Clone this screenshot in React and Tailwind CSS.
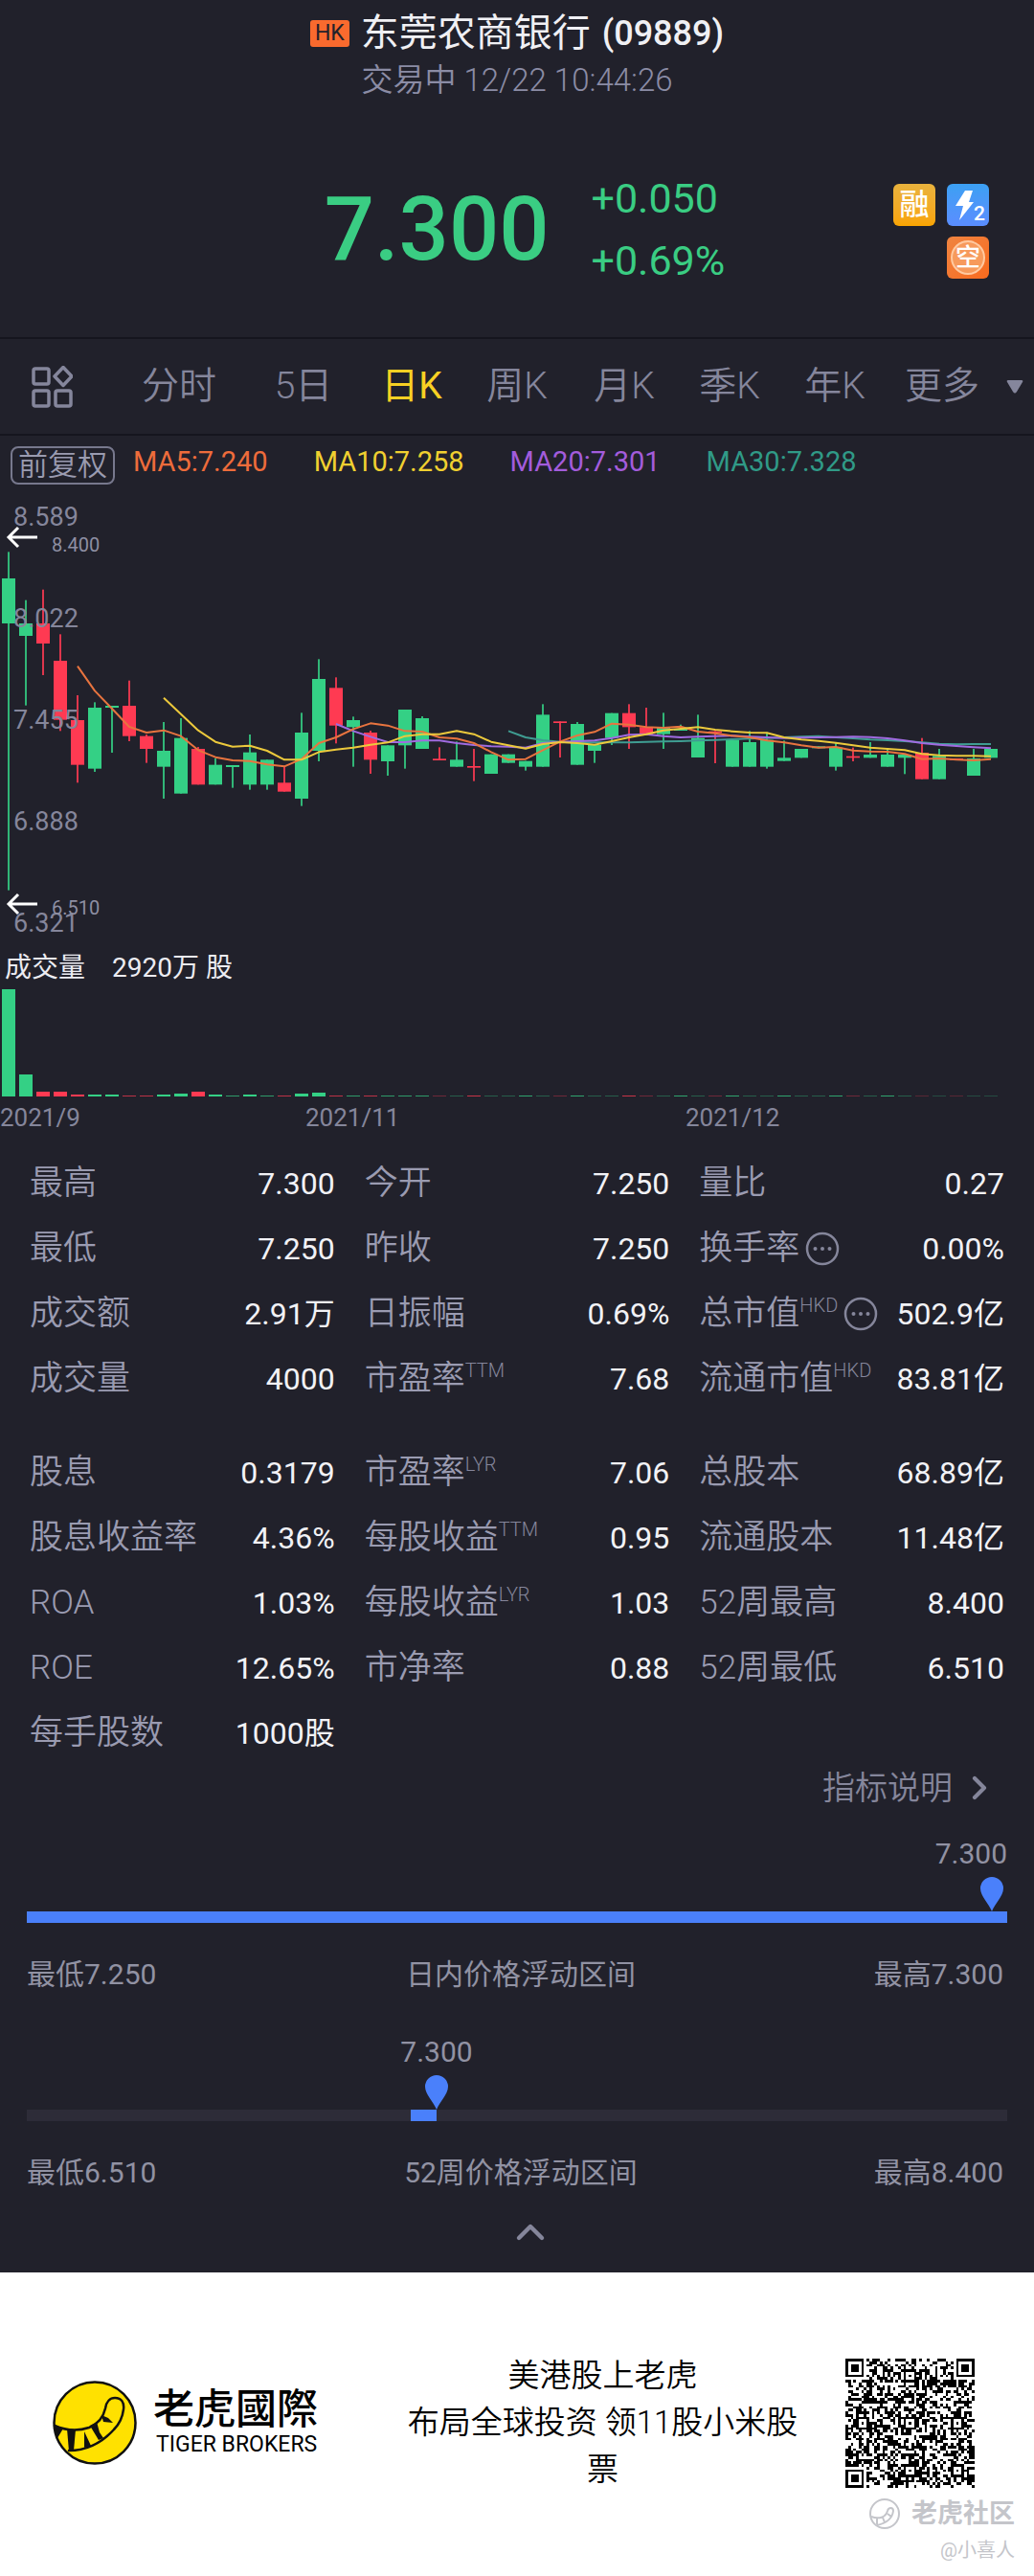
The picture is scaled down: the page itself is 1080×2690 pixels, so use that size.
import { ChevronRight, ChevronUp } from "lucide-react";

const UP = "#34d085";
const DOWN = "#ff3a52";

// [direction, high, low, body top, body bottom], in thirds of a chart unit
const CANDLES = [
  ["u", 229, 1289, 312, 453], ["u", 380, 710, 453, 492], ["d", 347, 615, 453, 516],
  ["d", 487, 790, 570, 755], ["d", 678, 952, 756, 896], ["u", 700, 918, 717, 908],
  ["u", 711, 858, 711, 717], ["d", 632, 822, 711, 806], ["d", 801, 890, 806, 846],
  ["u", 762, 1002, 852, 902], ["u", 750, 986, 812, 986], ["d", 840, 958, 846, 958],
  ["u", 876, 958, 896, 958], ["u", 897, 968, 897, 903], ["u", 801, 974, 857, 958],
  ["u", 880, 974, 880, 958], ["d", 902, 980, 952, 980], ["u", 733, 1025, 795, 1002],
  ["u", 565, 885, 627, 852], ["d", 622, 829, 655, 773], ["u", 745, 902, 756, 778],
  ["d", 789, 924, 795, 880], ["u", 835, 930, 835, 885], ["u", 723, 908, 723, 835],
  ["u", 744, 846, 750, 846], ["d", 841, 880, 877, 882], ["u", 823, 902, 880, 902],
  ["d", 846, 947, 900, 905], ["u", 863, 924, 863, 924], ["u", 863, 890, 863, 890],
  ["u", 884, 914, 884, 902], ["u", 706, 902, 739, 902], ["d", 760, 873, 760, 765],
  ["u", 762, 896, 768, 896], ["u", 834, 890, 834, 852], ["u", 734, 834, 734, 812],
  ["d", 706, 846, 734, 778], ["d", 717, 800, 778, 800], ["u", 733, 846, 780, 800],
  ["u", 770, 789, 783, 789], ["u", 739, 873, 812, 873], ["d", 790, 891, 791, 796],
  ["u", 818, 902, 818, 902], ["u", 790, 902, 825, 902], ["u", 794, 908, 818, 902],
  ["u", 820, 884, 874, 884], ["u", 846, 874, 846, 874], ["u", 838, 844, 838, 844],
  ["u", 825, 914, 842, 902], ["d", 842, 885, 869, 874], ["u", 825, 874, 864, 874],
  ["u", 846, 902, 864, 902], ["u", 864, 925, 864, 874], ["d", 812, 941, 858, 941],
  ["u", 846, 941, 868, 941], ["d", 876, 882, 876, 882], ["u", 846, 930, 876, 930],
  ["u", 846, 874, 846, 874],
];

const AVERAGES = [
  { start: 29, color: "#3f9d92", values: [790, 810, 819, 824, 826, 826, 826, 826, 824, 823, 822, 820, 818, 816, 814, 812, 810, 808, 806, 810, 813, 817, 819, 822, 826, 830, 832, 831, 831] },
  { start: 19, color: "#a06be0", values: [768, 790, 808, 825, 825, 820, 820, 828, 834, 838, 839, 842, 828, 824, 822, 820, 812, 802, 800, 806, 810, 808, 806, 805, 808, 810, 812, 811, 810, 809, 808, 809, 813, 820, 828, 833, 837, 841, 844] },
  { start: 4, color: "#e8743f", values: [587, 664, 720, 777, 795, 788, 806, 850, 872, 882, 884, 895, 901, 878, 828, 810, 784, 766, 773, 790, 792, 810, 814, 828, 856, 880, 878, 850, 823, 804, 793, 767, 770, 778, 780, 776, 792, 797, 805, 810, 820, 826, 835, 842, 840, 851, 854, 855, 862, 878, 876, 880, 882, 878] },
  { start: 9, color: "#ecc93c", values: [686, 737, 788, 824, 839, 836, 852, 880, 880, 856, 848, 842, 833, 826, 806, 800, 800, 790, 800, 824, 835, 845, 831, 825, 828, 833, 822, 810, 800, 788, 783, 778, 786, 791, 795, 796, 810, 817, 821, 827, 835, 842, 846, 850, 862, 866, 868, 868, 869] },
];

const VOLUMES = [112, 23, 5, 5, 2, 2, 2, 1, 1, 2, 3, 5, 2, 1, 2, 1, 1, 3, 4, 1, 1, 1, 1, 1, 1];

const cx = (i) => 9 + i * 18;

function PriceChart() {
  return (
    <svg viewBox="0 10 1080 473" className="block w-full" role="img" aria-label="日K">
      {CANDLES.map(([dir, hi, lo, top, bottom], i) => {
        const color = dir === "u" ? UP : DOWN;
        return (
          <g key={i} fill={color}>
            <rect x={cx(i) - 1} y={hi / 3} width="2" height={(lo - hi) / 3} opacity="0.85" />
            <rect x={cx(i) - 7} y={top / 3} width="14" height={(bottom - top) / 3} />
          </g>
        );
      })}
      {AVERAGES.map(({ start, color, values }) => (
        <polyline
          key={color}
          fill="none"
          stroke={color}
          strokeWidth="2"
          strokeLinejoin="round"
          points={values.map((v, i) => `${cx(start + i)},${v / 3}`).join(" ")}
        />
      ))}
      <g fill="#85869b" fontSize="27">
        {["8.589", "8.022", "7.455", "6.888", "6.321"].map((t, i) => (
          <text key={t} x="14" y={49 + i * 106}>{t}</text>
        ))}
      </g>
      <g fill="#8e8fa3" fontSize="20">
        <text x="54" y="76">8.400</text>
        <text x="54" y="455">6.510</text>
      </g>
      <g fill="none" stroke="#ffffff" strokeWidth="3">
        <path d="M39 61H9M19 51L9 61l10 10" />
        <path d="M39 444H9M19 434L9 444l10 10" />
      </g>
    </svg>
  );
}

function VolumeChart() {
  return (
    <svg viewBox="0 0 1080 114" className="block w-full" role="img" aria-label="成交量">
      {CANDLES.map(([dir], i) => {
        const h = VOLUMES[i] || 1;
        const opacity = h > 1 ? 1 : i < 25 ? 0.7 : i > 52 ? 0.25 : i % 3 === 0 ? 0.75 : 0.35;
        return (
          <rect key={i} x={cx(i) - 7} y={113 - h} width="14" height={h} fill={dir === "u" ? UP : DOWN} opacity={opacity} />
        );
      })}
    </svg>
  );
}

const TABS = ["分时", "5日", "日K", "周K", "月K", "季K", "年K", "更多"];

const STATS_TOP = [
  ["最高", "7.300"], ["今开", "7.250"], ["量比", "0.27"],
  ["最低", "7.250"], ["昨收", "7.250"], ["换手率", "0.00%", "", true],
  ["成交额", "2.91万"], ["日振幅", "0.69%"], ["总市值", "502.9亿", "HKD", true],
  ["成交量", "4000"], ["市盈率", "7.68", "TTM"], ["流通市值", "83.81亿", "HKD"],
];

const STATS_BOTTOM = [
  ["股息", "0.3179"], ["市盈率", "7.06", "LYR"], ["总股本", "68.89亿"],
  ["股息收益率", "4.36%"], ["每股收益", "0.95", "TTM"], ["流通股本", "11.48亿"],
  ["ROA", "1.03%"], ["每股收益", "1.03", "LYR"], ["52周最高", "8.400"],
  ["ROE", "12.65%"], ["市净率", "0.88"], ["52周最低", "6.510"],
  ["每手股数", "1000股"],
];

function MoreInfo({ label }) {
  return (
    <button type="button" aria-label={label} className="ml-1.5 shrink-0">
      <svg viewBox="0 0 36 36" className="block size-9" fill="none">
        <circle cx="18" cy="18" r="16" stroke="#85869b" strokeWidth="2.5" />
        <g fill="#85869b">
          <circle cx="10.500" cy="18" r="2" />
          <circle cx="18" cy="18" r="2" />
          <circle cx="25.500" cy="18" r="2" />
        </g>
      </svg>
    </button>
  );
}

function Stats({ rows }) {
  return (
    <dl className="grid grid-cols-3 gap-x-[31px] whitespace-nowrap">
      {rows.map(([label, value, sup, info], i) => (
        <div key={i} className="flex h-[68px] items-center justify-between">
          <dt className="flex items-center text-[35px] leading-[68px] font-[350] text-[#9a9bb1]">
            {label}
            {sup ? <span className="mb-[18px] self-center text-[20px] leading-6 text-[#85869b]">{sup}</span> : null}
            {info ? <MoreInfo label={label + "说明"} /> : null}
          </dt>
          <dd className="text-[32px] leading-[68px] text-[#f2f2f6]">{value}</dd>
        </div>
      ))}
    </dl>
  );
}

function PriceRange({ low, title, high, pin, from, to, edge }) {
  return (
    <section className="px-7 text-[30px] leading-10 text-[#9192a3]">
      <div className="relative h-[80px]">
        {edge ? (
          <div className="text-right">7.300</div>
        ) : (
          <div className="absolute top-0 -translate-x-1/2" style={{ left: `${pin}%` }}>7.300</div>
        )}
        <svg
          viewBox="0 0 24 36"
          className="absolute bottom-0 h-9 w-6 -translate-x-1/2"
          style={{ left: `${pin}%` }}
          aria-hidden="true"
        >
          <path d="M12 36C9 28 0 20 0 12a12 12 0 0 1 24 0c0 8-9 16-12 24Z" fill="#4a80fb" />
        </svg>
      </div>
      <div className="h-3 bg-[#2d2c38]">
        <div className="h-3 bg-[#4a80fb]" style={{ marginLeft: `${from}%`, width: `${to - from}%` }} />
      </div>
      <div className="mt-[34px] grid grid-cols-3 pr-1">
        <span>{low}</span>
        <span className="pl-3 text-center">{title}</span>
        <span className="text-right">{high}</span>
      </div>
    </section>
  );
}

const QR_SIZE = 49;
function qrPath() {
  const grid = [];
  let seed = 20211222;
  for (let y = 0; y < QR_SIZE; y++) {
    grid.push([]);
    for (let x = 0; x < QR_SIZE; x++) {
      seed = (Math.imul(seed, 1664525) + 1013904223) >>> 0;
      grid[y].push(((seed >>> 16) & 255) < 128);
    }
  }
  for (let i = 8; i < QR_SIZE - 8; i++) {
    grid[6][i] = i % 2 === 0;
    grid[i][6] = i % 2 === 0;
  }
  const ring = (mx, my, r, dark) => {
    for (let y = -r; y <= r; y++)
      for (let x = -r; x <= r; x++) {
        if (grid[my + y] === undefined || grid[my + y][mx + x] === undefined) continue;
        grid[my + y][mx + x] = dark(Math.max(Math.abs(x), Math.abs(y)));
      }
  };
  [[3, 3], [45, 3], [3, 45]].forEach(([x, y]) => ring(x, y, 4, (d) => d < 2 || d === 3));
  [[24, 6], [6, 24], [24, 24], [42, 24], [24, 42], [42, 42]].forEach(([x, y]) => ring(x, y, 2, (d) => d !== 1));
  let d = "";
  grid.forEach((row, y) => row.forEach((on, x) => { if (on) d += `M${x} ${y}h1v1h-1z`; }));
  return d;
}

function TigerLogo() {
  return (
    <svg viewBox="0 0 88 88" className="size-[88px] shrink-0" aria-hidden="true">
      <circle cx="44" cy="44" r="42.500" fill="#ffe100" stroke="#111" strokeWidth="2.500" />
      <g fill="none" stroke="#111" strokeWidth="2.500" strokeLinecap="round">
        <path d="M2 47C16 53 29 52 38 49c10-4 15-11 17-20 1-7 5-11 10-11 7 0 10 5 9 12-1 8-4 15-10 21C54 62 40 73 17 73" />
      </g>
      <g fill="#111">
        <path d="M2 46l9 4-6 10c-2-4-3-9-3-14Z" />
        <path d="M15 50l9 1-2 22-5 1Z" />
        <path d="M33 53l7 15-7 2Z" />
        <path d="M39 47l7-4 3 11 4 6-5 2Z" />
        <path d="M51 36l7 3 5 5-10-1Z" />
      </g>
    </svg>
  );
}

export default function App() {
  return (
    <main className="w-full bg-[#21212b] font-[Roboto,'Noto_Sans_CJK_SC',sans-serif]">
      <header className="text-center">
        <h1 className="flex items-center justify-center pt-2.5 text-[40px] leading-[50px] text-[#f0f0f4]">
          <span className="mr-3 rounded-[3px] bg-[#f96a2e] px-[5px] text-[23px] leading-7 text-[#21212b]">HK</span>
          东莞农商银行
          <span className="ml-3 text-[36px] font-medium">(09889)</span>
        </h1>
        <p className="text-[33px] leading-[48px] font-[350] text-[#8b8ca5]">交易中 12/22 10:44:26</p>
      </header>

      <section className="grid h-[244px] grid-cols-[1fr_auto_1fr] pt-[67px] text-[#3acd83]">
        <div />
        <div className="flex items-center gap-[44px] self-start pl-4">
          <strong className="text-[92px] leading-[130px] font-medium">7.300</strong>
          <div className="text-[43px] leading-[65px]">
            <div>+0.050</div>
            <div>+0.69%</div>
          </div>
        </div>
        <div className="grid grid-cols-[44px_44px] content-start justify-end gap-x-3 gap-y-[11px] pt-[17px] pr-[47px] text-white">
          <span className="rounded-md bg-linear-to-b from-[#e9b23c] to-[#f9a400] text-center text-[31px] leading-[44px] font-medium">融</span>
          <span className="rounded-md bg-linear-to-b from-[#3ba0f3] to-[#5a8dff]">
            <svg viewBox="0 0 44 44" className="block size-11" fill="#fff" aria-hidden="true">
              <path d="M19 7h8l-4 12h5L13 38l4-15H9Z" />
              <text x="28" y="38" fontSize="21" fontWeight="500">2</text>
            </svg>
          </span>
          <span className="col-start-2 flex size-11 items-center justify-center rounded-md bg-linear-to-br from-[#ef8440] to-[#f96a1c]">
            <span className="size-9 rounded-full border-2 border-[#ffc9a0] bg-[#f79a5c] text-center text-[26px] leading-8 font-medium">空</span>
          </span>
        </div>
      </section>

      <nav className="grid h-[103px] grid-cols-[117fr_140fr_120fr_106fr_114fr_110fr_110fr_110fr_114fr_39fr] items-center border-y-2 border-[#15151e] text-[39px] font-[350] whitespace-nowrap text-[#85869c]">
        <button type="button" aria-label="指标" className="pl-8">
          <svg viewBox="0 0 44 44" className="block size-11" fill="none" stroke="#85869c" strokeWidth="3.500" strokeLinejoin="round">
            <rect x="3" y="3" width="16" height="16" rx="2" />
            <rect x="3" y="26" width="16" height="16" rx="2" />
            <rect x="26" y="26" width="16" height="16" rx="2" />
            <path d="M34 1.500 43 11l-9 9.500L25 11Z" />
          </svg>
        </button>
        {TABS.map((t) => (
          <button key={t} type="button" className={t === "日K" ? "font-normal text-[#f7d023]" : ""}>
            {t}
          </button>
        ))}
        <svg viewBox="0 0 18 14" className="ml-2.5 h-3.5 w-[18px]" fill="#85869c" aria-hidden="true">
          <path d="M2 0h14q2 0 1 2l-6 10q-2 3-4 0L1 2Q0 0 2 0Z" />
        </svg>
      </nav>

      <section>
        <div className="flex h-[55px] items-start pt-[11px] pl-[11px] text-[29px] leading-8 whitespace-nowrap">
          <button type="button" className="mr-[19px] rounded-lg border-2 border-[#77788d] px-1.5 text-[31px] leading-9 font-[350] text-[#9a9bb0]">
            前复权
          </button>
          <span className="mr-12 text-[#ee6c3b]">MA5:7.240</span>
          <span className="mr-12 text-[#f0d030]">MA10:7.258</span>
          <span className="mr-12 text-[#a35cdc]">MA20:7.301</span>
          <span className="text-[#309a87]">MA30:7.328</span>
        </div>
        <PriceChart />
        <div className="flex h-[49px] items-end gap-7 pl-[5px] text-[28px] leading-[42px] text-[#ececf2]">
          <span>成交量</span>
          <span>2920万 股</span>
        </div>
        <VolumeChart />
        <div className="grid grid-cols-[319fr_397fr_364fr] text-[26px] leading-[42px] text-[#85869b]">
          <span>2021/9</span>
          <span>2021/11</span>
          <span>2021/12</span>
        </div>
      </section>

      <section className="px-[31px] pt-[14px]">
        <Stats rows={STATS_TOP} />
        <div className="h-[30px]" />
        <Stats rows={STATS_BOTTOM} />
      </section>

      <div className="flex h-[46px] items-center justify-end pr-[37px]">
        <a href="#indicators" className="flex items-center gap-2 text-[34px] leading-[46px] font-[350] text-[#85869b]">
          指标说明
          <ChevronRight className="size-10" strokeWidth={2.5} />
        </a>
      </div>

      <div className="flex flex-col gap-[41px] pt-[26px]">
        <PriceRange low="最低7.250" title="日内价格浮动区间" high="最高7.300" pin={98.4} from={0} to={100} edge />
        <PriceRange low="最低6.510" title="52周价格浮动区间" high="最高8.400" pin={41.8} from={39.2} to={41.8} />
      </div>
      <div className="flex h-[84px] items-center justify-center pl-[27px]">
        <button type="button" aria-label="收起" className="text-[#85869b]">
          <ChevronUp className="size-12" strokeWidth={2.2} />
        </button>
      </div>

      <footer className="relative flex h-[316px] bg-white text-black">
        <div className="flex h-[314px] items-center gap-[17px] pl-[55px]">
          <TigerLogo />
          <div>
            <div className="font-[Roboto,'Noto_Sans_CJK_TC',sans-serif] text-[43px] leading-[46px] font-medium whitespace-nowrap">老虎國際</div>
            <div className="pl-[3px] text-[23px] leading-7 whitespace-nowrap">TIGER BROKERS</div>
          </div>
        </div>
        <p className="flex-1 pt-[83px] pr-[38px] pl-[82px] text-center text-[33px] leading-[49px] font-[350]">
          美港股上老虎
          <br />
          布局全球投资 领11股小米股票
        </p>
        <svg viewBox="0 0 49 49" className="mt-[90px] mr-[62px] size-[135px] shrink-0" shapeRendering="crispEdges" role="img" aria-label="QR">
          <path d={qrPath()} />
        </svg>
        <div className="absolute right-5 bottom-2 text-right text-[#c4c5ca]">
          <div className="flex items-center justify-end gap-3 text-[27px] leading-10 font-bold">
            <svg viewBox="0 0 32 32" className="size-8" fill="none" stroke="#c4c5ca" strokeWidth="2" aria-hidden="true">
              <circle cx="16" cy="16" r="15" />
              <path d="M2 19c8 3 15 1 17-6 1-4 6-4 6 0-1 8-8 13-17 15M8 21v6M14 20l2 5M19 16l4 3" />
            </svg>
            老虎社区
          </div>
          <div className="text-[20px] leading-9">@小喜人</div>
        </div>
      </footer>
    </main>
  );
}
